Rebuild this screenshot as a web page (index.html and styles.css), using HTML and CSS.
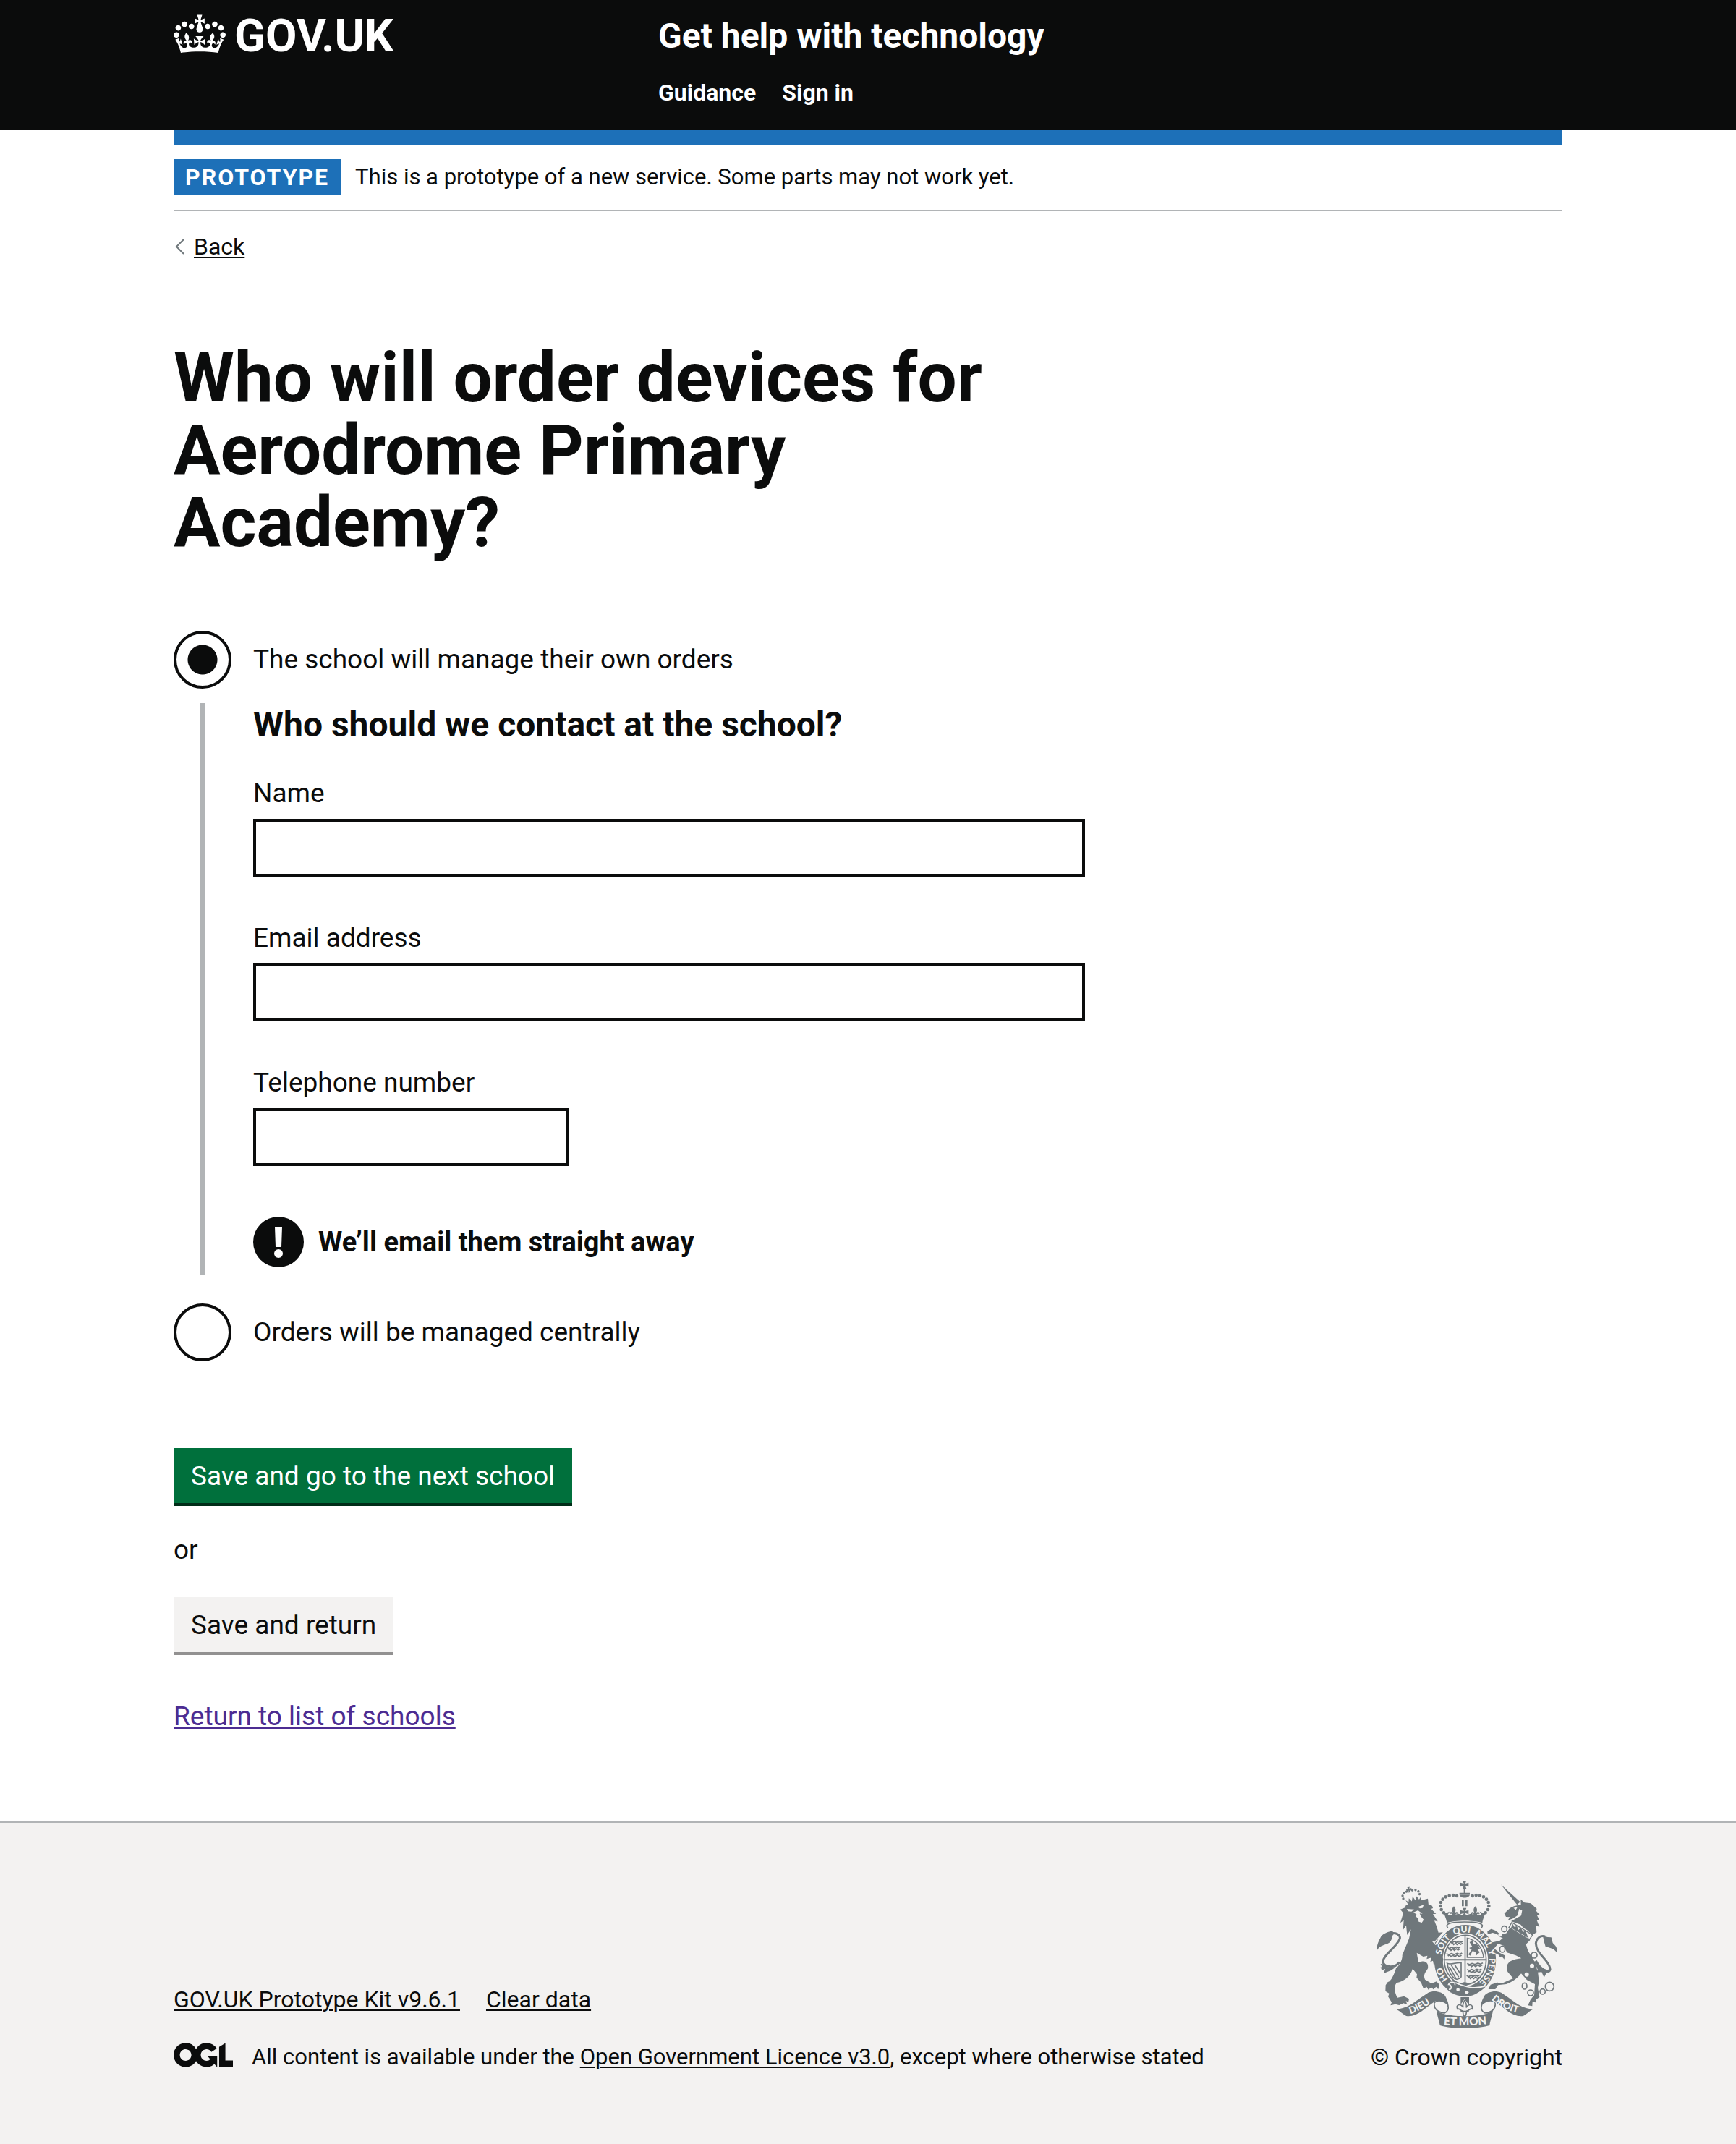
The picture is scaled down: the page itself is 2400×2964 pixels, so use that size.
FILE: index.html
```html
<!DOCTYPE html>
<html lang="en">
<head>
<meta charset="utf-8">
<meta name="viewport" content="width=device-width, initial-scale=1">
<title>Who will order devices for Aerodrome Primary Academy? - Get help with technology</title>
<link rel="stylesheet" href="styles.css">
</head>
<body>
<header class="header">
  <div class="container header-grid">
    <a class="logo" href="#">
      <svg class="logo-crown" viewBox="0 0 132 97" aria-hidden="true"><path fill="currentColor" fill-rule="evenodd" d="M25 30.2c3.5 1.5 7.7-.2 9.1-3.7 1.5-3.6-.2-7.8-3.9-9.2-3.6-1.4-7.6.3-9.1 3.9-1.4 3.5.3 7.5 3.9 9zM9 39.5c3.6 1.5 7.8-.2 9.2-3.7 1.5-3.6-.2-7.8-3.9-9.1-3.6-1.5-7.6.2-9.1 3.8-1.4 3.5.3 7.5 3.8 9zM4.4 57.2c3.5 1.5 7.7-.2 9.1-3.8 1.5-3.6-.2-7.7-3.9-9.1-3.5-1.5-7.6.3-9.1 3.8-1.4 3.5.3 7.6 3.9 9.1zm38.3-21.4c3.5 1.5 7.7-.2 9.1-3.8 1.5-3.6-.2-7.7-3.9-9.1-3.6-1.5-7.6.3-9.1 3.8-1.3 3.6.4 7.7 3.9 9.1zm64.4-5.6c-3.6 1.5-7.8-.2-9.1-3.7-1.5-3.6.2-7.8 3.8-9.2 3.6-1.4 7.7.3 9.2 3.9 1.3 3.5-.4 7.5-3.9 9zm15.9 9.3c-3.6 1.5-7.7-.2-9.1-3.7-1.5-3.6.2-7.8 3.7-9.1 3.6-1.5 7.7.2 9.2 3.8 1.5 3.5-.3 7.5-3.8 9zm4.7 17.7c-3.6 1.5-7.8-.2-9.2-3.8-1.5-3.6.2-7.7 3.9-9.1 3.6-1.5 7.7.3 9.2 3.8 1.3 3.5-.4 7.6-3.9 9.1zM89.3 35.8c-3.6 1.5-7.8-.2-9.2-3.8-1.4-3.6.2-7.7 3.9-9.1 3.6-1.5 7.7.3 9.2 3.8 1.4 3.6-.3 7.7-3.9 9.1zM69.7 17.7l8.9 4.7V9.3l-8.9 2.8c-.2-.3-.5-.6-.9-.9L72.4 0H59.6l3.5 11.2c-.3.3-.6.5-.9.9l-8.8-2.8v13.1l8.8-4.7c.3.3.6.7.9.9l-5 15.4v.1c-.2.8-.4 1.6-.4 2.4 0 4.1 3.1 7.5 7 8.1h.2c.3 0 .7.1 1 .1.4 0 .7 0 1-.1h.2c4-.6 7.1-4.1 7.1-8.1 0-.8-.1-1.7-.4-2.4V34l-5.1-15.4c.4-.2.7-.6 1-.9zM66 92.8c16.9 0 32.8 1.1 47.1 3.2 4-16.9 8.9-26.7 14-33.5l-9.6-3.4c1 4.9 1.1 7.2 0 10.2-1.5-1.4-3-4.3-4.2-8.7L108.6 76c2.8-2 5-3.2 7.5-3.3-4.4 9.4-10 11.9-13.6 11.2-4.3-.8-6.3-4.6-5.6-7.9 1-4.7 5.7-5.9 8-.5 4.3-8.7-3-11.4-7.6-8.8 7.1-7.2 7.9-13.5 2.1-21.1-8 6.1-8.1 12.3-4.5 20.8-4.7-5.4-12.1-2.5-9.5 6.2 3.4-5.2 7.9-2 7.2 3.1-.6 4.3-6.4 7.8-13.5 7.2-10.3-.9-10.9-8-11.2-13.8 2.5-.5 7.1 1.8 11 7.3L80.2 60c-4.1 4.4-8 5.3-12.3 5.4 1.4-4.4 8-11.6 8-11.6H55.5s6.4 7.2 7.9 11.6c-4.2-.1-8-1-12.3-5.4l1.4 16.4c3.9-5.5 8.5-7.7 10.9-7.3-.3 5.8-.9 12.8-11.1 13.8-7.2.6-12.9-2.9-13.5-7.2-.7-5 3.8-8.3 7.1-3.1 2.7-8.7-4.6-11.6-9.4-6.2 3.7-8.5 3.6-14.7-4.6-20.8-5.8 7.6-5 13.9 2.2 21.1-4.7-2.6-11.9.1-7.7 8.8 2.3-5.5 7.1-4.2 8.1.5.7 3.3-1.3 7.1-5.7 7.9-3.5.7-9-1.8-13.5-11.2 2.5.1 4.7 1.3 7.5 3.3l-4.7-15.4c-1.2 4.4-2.7 7.2-4.3 8.7-1.1-3-.9-5.3 0-10.2l-9.5 3.4c5 6.9 9.9 16.7 14 33.5 14.8-2.1 30.8-3.2 47.7-3.2z"/></svg>
      <span class="logo-text">GOV.UK</span>
    </a>
    <div>
      <a class="service-name" href="#">Get help with technology</a>
      <nav class="header-nav" aria-label="Top level navigation">
        <a href="#">Guidance</a>
        <a href="#">Sign in</a>
      </nav>
    </div>
  </div>
</header>

<div class="container">
  <div class="header-bar"></div>
  <div class="phase-banner">
    <strong class="tag">PROTOTYPE</strong>
    <span>This is a prototype of a new service. Some parts may not work yet.</span>
  </div>
  <a class="back-link" href="#">
    <svg class="back-arrow" viewBox="0 0 16 24" aria-hidden="true"><path d="M14 2 4 12l10 10" fill="none" stroke="#6f777b" stroke-width="2"/></svg>
    <span class="back-text">Back</span>
  </a>

  <main class="main">
    <form class="form">
      <fieldset class="fieldset">
        <legend class="title"><h1 class="title-text">Who will order devices for Aerodrome Primary Academy?</h1></legend>

        <div class="radio">
          <input class="radio-input" type="radio" id="own" name="orders" checked>
          <label class="radio-label" for="own">The school will manage their own orders</label>
        </div>

        <div class="conditional">
          <h2 class="subtitle">Who should we contact at the school?</h2>
          <div class="field">
            <label for="name">Name</label>
            <input class="input" id="name" name="name" type="text">
          </div>
          <div class="field">
            <label for="email">Email address</label>
            <input class="input" id="email" name="email" type="email">
          </div>
          <div class="field">
            <label for="tel">Telephone number</label>
            <input class="input input-short" id="tel" name="tel" type="tel">
          </div>
          <div class="warning">
            <svg class="warning-icon" viewBox="0 0 70 70" aria-hidden="true"><circle cx="35" cy="35" r="35" fill="#0b0c0c"/><path d="M30 14h10l-1 28h-8z" fill="#fff"/><circle cx="35" cy="51" r="6" fill="#fff"/></svg>
            <strong>We’ll email them straight away</strong>
          </div>
        </div>

        <div class="radio">
          <input class="radio-input" type="radio" id="central" name="orders">
          <label class="radio-label" for="central">Orders will be managed centrally</label>
        </div>
      </fieldset>

      <div class="actions">
        <button class="button" type="submit">Save and go to the next school</button>
        <p class="or">or</p>
        <button class="button button-secondary" type="submit">Save and return</button>
      </div>
      <a class="return-link" href="#">Return to list of schools</a>
    </form>
  </main>
</div>

<footer class="footer">
  <div class="container footer-row">
    <div class="footer-main">
      <ul class="footer-links">
        <li><a href="#">GOV.UK Prototype Kit v9.6.1</a></li>
        <li><a href="#">Clear data</a></li>
      </ul>
      <div class="licence">
        <svg class="ogl" viewBox="0 0 483 196" aria-hidden="true"><path fill="currentColor" d="M421.500 142.800V.1l-50.700 32.300v161.100h112.400v-50.700zm-122.300-9.600A47.120 47.120 0 0 1 221 97.800c0-26 21.100-47.100 47.100-47.100 16.700 0 31.400 8.700 39.700 21.800l42.700-27.200A97.630 97.630 0 0 0 268.100 0c-36.500 0-68.300 20.100-85.100 49.700A98 98 0 0 0 97.800 0C43.900 0 0 43.900 0 97.800s43.900 97.800 97.800 97.800c36.500 0 68.300-20.100 85.100-49.700a97.760 97.760 0 0 0 149.600 25.400l19.400 22.200h3v-87.800h-80l24.300 27.500zM97.800 145c-26 0-47.100-21.100-47.100-47.100s21.100-47.100 47.100-47.100 47.100 21.100 47.100 47.100S123.800 145 97.800 145"/></svg>
        <span>All content is available under the <a href="#">Open Government Licence v3.0</a>, except where otherwise stated</span>
      </div>
    </div>
    <a class="copyright" href="#">
      <svg class="crest" viewBox="72 60 750 612" aria-hidden="true">
        <defs>
          <path id="motto" d="M440 502A100 114 0 0 1 440 274A100 114 0 0 1 440 502"/>
          <path id="dieu" d="M212 612Q264 598 326 544"/>
          <path id="droit" d="M548 552Q594 598 686 616"/>
          <path id="mon" d="M350 657Q437 666 534 654"/>
          <g id="lions" fill="none" stroke-width="5"><path d="M0 4l8 5 9-5 10 4 10-5 9 4 8-5M5 14l6-4 4 7 8-6 6 6 8-7 7 6 8-5"/></g>
          <g id="fleur"><path d="M0-24C-11-11-7-5-4 4C-12-5-21 2-16 10C-12 4-8 7-5 14H5C8 7 12 4 16 10C21 2 12-5 4 4C7-5 11-11 0-24Z"/></g>
          <g id="cross"><path d="M-8-17H8L3-4 17-8V9L3 4 8 17H-8L-3 4-17 9V-8L-3-4Z"/></g>
        </defs>
        <g class="crest-fill">
          <!-- lion -->
          <g transform="translate(216 118) rotate(-14)"><path d="M-28 17-22 38H34L38 17 27 27 20 12 11 27 4 8-4 27-13 12-18 27Z"/><use href="#cross" transform="translate(-4 -22) scale(.65)"/><circle cx="-16" cy="-17" r="5"/><circle cx="-28" cy="-14" r="5"/><circle cx="-36" cy="-4" r="5"/><circle cx="-36" cy="8" r="5"/><circle cx="9" cy="-17" r="5"/><circle cx="22" cy="-15" r="5"/><circle cx="32" cy="-6" r="5"/><circle cx="34" cy="6" r="5"/></g>
          <path d="M171 179 190 172 194 162 262 140 285 134 288 162C298 158 306 165 306 174L299 177 319 198 306 198 326 229 312 226 322 251 329 275 347 274 317 320 333 350 349 385 344 418 334 407 324 416 320 400 309 408 306 392 295 397 300 379 280 385 283 371 266 375 239 359 246 399C276 386 289 402 285 424C276 440 264 449 273 470L300 486 321 478 333 491 328 510 319 500 308 511 299 502 287 512 280 500 267 508 257 482 238 462 240 448 222 425C214 455 188 477 155 484C142 500 148 528 159 545L186 539 207 550 204 565 194 558 199 574 184 568 166 576 150 572 130 577 135 565 120 540 125 528 109 518 110 493 119 480C132 479 146 447 153 423C170 409 180 384 179 368L207 300 215 262 199 285 195 246 182 264 185 224 171 235 183 194Z"/>
          <path d="M167 398C147 427 96 418 99 393C104 363 155 337 169 300C171 283 151 273 128 279" fill="none" class="crest-line" stroke-width="9"/>
          <path d="M72 352C74 320 82 310 91 291C106 274 126 272 137 267L146 281C132 287 143 296 127 316C107 331 89 322 72 352ZM89 405 98 423 89 417 94 431 108 426 102 444 132 432 151 419 119 418 104 407Z"/>
          <path class="crest-paper" d="M198 177 228 179 217 188 203 187ZM243 169 268 160 263 173 252 175ZM224 192 244 183 263 197 251 196 256 208 268 222 260 234 247 230 244 217 234 207 238 199Z"/>
          <!-- unicorn -->
          <path d="M588 76 668 148 655 160ZM602 196 623 176C640 164 657 162 671 160L670 137 686 151 712 154 738 178 730 181 749 202 738 204 747 223 737 224 748 252 734 245 736 274 718 286 697 265 681 256 670 242 630 228 672 205 676 184 664 177 656 205 638 217 617 224 625 211 609 210Z"/>
          <path d="M625 256 709 306 692 324 700 350 730 399 742 445 746 478 741 505 748 543 735 552 734 565 719 563 718 580 700 577 711 553 726 535 729 489 696 472 672 445C655 465 637 480 610 489L576 493 565 510 536 510 545 491 573 482 593 485 639 465 616 438C607 407 617 388 673 382L650 370 613 358 600 330 576 321 560 341 584 360 604 370 602 386 592 374 583 376 580 368 562 359 541 330 552 316 583 309 596 298 584 293 572 281 554 276 533 282 532 269 548 260 568 268 583 281 610 278Z"/>
          <path d="M633 233 719 285 706 305 621 254Z" class="crest-paper crest-line" stroke-width="4"/>
          <path d="M630 255 637 239 644 252 655 248 660 265 671 254 680 273 690 267 700 293 706 300Z"/>
          <path d="M733 392C752 430 798 454 791 420C782 385 734 362 733 320C736 297 752 286 771 291" fill="none" class="crest-line" stroke-width="9"/>
          <path d="M762 289 782 294 797 295 803 318C812 329 823 333 822 362C810 340 795 340 773 333L767 313ZM724 391 744 415 778 430 798 426 777 442 767 461 757 439 733 441 741 430Z"/>
          <g class="crest-paper"><circle cx="717" cy="413" r="9"/><circle cx="695" cy="449" r="9"/><circle cx="585" cy="284" r="8"/><path d="M640 173 657 169 650 181Z"/></g>
          <g fill="none" class="crest-line" stroke-width="5"><ellipse cx="602" cy="260" rx="11" ry="12"/><ellipse cx="594" cy="344" rx="11" ry="13"/><circle cx="726" cy="369" r="12"/><ellipse cx="686" cy="497" rx="10" ry="13"/><circle cx="711" cy="525" r="12"/><circle cx="761" cy="520" r="11"/><circle cx="790" cy="499" r="18"/></g>
          <!-- royal crown -->
          <use href="#cross" transform="translate(437 76)"/>
          <path d="M416 110H434V93H441V110H459V114H416ZM416 118H459C457 135 418 135 416 118ZM426 138H434V166H426ZM441 138H449V166H441Z"/>
          <g><circle cx="405" cy="123" r="7"/><circle cx="390" cy="120" r="7"/><circle cx="374" cy="122" r="7"/><circle cx="359" cy="127" r="7"/><circle cx="347" cy="137" r="7"/><circle cx="339" cy="150" r="7"/><circle cx="337" cy="165" r="7"/><circle cx="341" cy="180" r="7"/><circle cx="351" cy="193" r="7"/><circle cx="470" cy="123" r="7"/><circle cx="485" cy="120" r="7"/><circle cx="501" cy="122" r="7"/><circle cx="516" cy="127" r="7"/><circle cx="528" cy="137" r="7"/><circle cx="536" cy="150" r="7"/><circle cx="538" cy="165" r="7"/><circle cx="534" cy="180" r="7"/><circle cx="524" cy="193" r="7"/></g>
          <use href="#fleur" transform="translate(393 190)"/><use href="#fleur" transform="translate(482 190)"/><use href="#cross" transform="translate(437 190)"/>
          <path d="M349 187 360 194 375 188 368 201 393 202 412 197 437 205 463 197 482 202 507 201 500 188 515 194 526 187C520 207 513 218 511 235C475 223 400 223 364 235C362 218 355 207 349 187Z"/>
          <path d="M368 255C354 241 374 231 437 231C501 231 521 241 507 255" fill="none" class="crest-line" stroke-width="5"/>
          <!-- garter -->
          <path fill-rule="evenodd" d="M440 243A128 147 0 1 1 439 243ZM440 278A94 110 0 1 0 441 278Z"/>
          <ellipse cx="440" cy="388" rx="87" ry="102" fill="none" class="crest-line" stroke-width="5"/>
          <path d="M437 286H442V490H437ZM353 385H527V391H353ZM415 487 437 480 464 487 437 499Z"/>
          <use href="#lions" class="crest-line" transform="translate(377 308)"/><use href="#lions" class="crest-line" transform="translate(366 332)"/><use href="#lions" class="crest-line" transform="translate(362 358) scale(1.2 1)"/>
          <use href="#lions" class="crest-line" transform="translate(448 399) scale(1.2 1)"/><use href="#lions" class="crest-line" transform="translate(448 424) scale(1.1 1)"/><use href="#lions" class="crest-line" transform="translate(446 449)"/>
          <path d="M448 298V378H516C511 340 493 309 448 298Z" fill="none" class="crest-line" stroke-width="4"/>
          <path d="M458 315 470 309 475 322 490 325 503 344 489 342 500 357 486 370 482 355 470 352 461 371 453 366 467 345 456 339 469 334Z"/>
          <path d="M365 403C382 410 400 398 423 401V459C397 489 373 444 365 403Z M382 410 413 460 M396 408 419 445 M374 417 402 467" fill="none" class="crest-line" stroke-width="5"/>
          <path d="M366 490 376 475 398 478 405 489C440 499 475 508 511 507C472 552 411 545 374 519L362 506Z" class="crest-line" stroke-width="1"/>
          <path d="M400 483C440 500 475 512 526 496" fill="none" class="crest-gap" stroke-width="5"/>
          <path d="M372 510C388 514 382 490 371 490C377 475 402 480 397 493" fill="none" class="crest-gap" stroke-width="5"/>
          <g class="crest-paper"><circle cx="410" cy="512" r="7"/><circle cx="447" cy="523" r="7"/></g>
          <g class="crest-paper crest-motto">
            <text><textPath href="#motto" startOffset="12%">HO</textPath></text>
            <text><textPath href="#motto" startOffset="28%">SOIT</textPath></text>
            <text><textPath href="#motto" startOffset="43%">QUI</textPath></text>
            <text><textPath href="#motto" startOffset="56%">MAL</textPath></text>
            <text><textPath href="#motto" startOffset="69%">Y</textPath></text>
            <text><textPath href="#motto" startOffset="74%">PENSE</textPath></text>
          </g>
          <path d="M311 318 345 279M304 310 318 326" fill="none" class="crest-gap" stroke-width="4"/>
          <!-- scrolls -->
          <path d="M421 543H456V574L447 565 437 551 427 565 421 574Z"/>
          <path d="M437 557C428 570 429 577 432 586C419 567 399 574 408 592C415 588 419 599 430 600L432 617Q438 626 443 617L446 600C457 599 461 588 468 592C475 574 456 567 444 586C446 577 447 570 437 557ZM421 602H455" class="crest-paper crest-line" stroke-width="5"/>
          <path d="M149 592C201 595 244 550 287 524C309 514 344 519 357 538C365 555 372 568 370 580C350 560 322 552 310 563C271 590 238 627 196 621C179 614 171 600 149 592Z"/>
          <path d="M725 592C673 595 632 550 589 524C567 514 532 519 519 538C511 555 504 568 506 580C526 560 554 552 566 563C605 590 638 627 680 621C697 614 705 600 725 592Z"/>
          <path d="M312 566C308 590 324 605 354 609C370 600 373 587 366 572C351 557 323 553 312 566ZM564 566C568 590 552 605 522 609C506 600 503 587 510 572C525 557 553 553 564 566Z" class="crest-paper crest-line" stroke-width="5"/>
          <path d="M321 598C350 630 525 630 555 598C552 621 544 636 541 660C487 676 388 676 335 660C331 636 323 621 321 598Z"/>
          <g class="crest-paper crest-scroll">
            <text><textPath href="#dieu">DIEU</textPath></text>
            <text><textPath href="#droit">DROIT</textPath></text>
            <text class="crest-scroll-wide"><textPath href="#mon">ET MON</textPath></text>
          </g>
        </g>
      </svg>
      <span>© Crown copyright</span>
    </a>
  </div>
</footer>
</body>
</html>
```
FILE: styles.css
```css
:root {
  --black: #0b0c0c;
  --blue: #1d70b8;
  --border: #b1b4b6;
  --paper: #f3f2f1;
  --crest: #6f777b;
}

* {
  box-sizing: border-box;
}

body {
  margin: 0;
  background: #fff;
  color: var(--black);
  font-family: Roboto, "Liberation Sans", Arial, sans-serif;
  font-size: 37px;
  line-height: 50px;
}

a {
  color: inherit;
  text-decoration-thickness: 2px;
  text-underline-offset: 3px;
}

.container {
  max-width: 1920px;
  margin: 0 auto;
}

/* Header */
.header {
  background: var(--black);
  color: #fff;
}

.header a {
  text-decoration: none;
}

.header-grid {
  display: grid;
  grid-template-columns: 33.333% 1fr;
  column-gap: 30px;
  padding: 20px 0 32px;
}

.logo {
  display: flex;
  gap: 12px;
  align-items: flex-start;
}

.logo-crown {
  width: 72px;
  height: 54px;
}

.logo-text {
  font-size: 63px;
  font-weight: 700;
  line-height: 60px;
}

.service-name {
  display: block;
  font-size: 48px;
  font-weight: 700;
  line-height: 60px;
}

.header-nav {
  display: flex;
  gap: 36px;
  margin-top: 28px;
  font-size: 32px;
  font-weight: 700;
  line-height: 40px;
}

.header-bar {
  height: 20px;
  background: var(--blue);
}

/* Phase banner and back link */
.phase-banner {
  display: flex;
  gap: 20px;
  padding: 20px 0;
  border-bottom: 2px solid var(--border);
  font-size: 31px;
}

.tag {
  padding: 0 16px;
  background: var(--blue);
  color: #fff;
  font-size: 32px;
  letter-spacing: 2px;
}

.back-link {
  display: flex;
  gap: 12px;
  align-items: center;
  width: fit-content;
  margin-top: 30px;
  font-size: 32px;
  line-height: 38px;
  text-decoration: none;
}

.back-arrow {
  width: 16px;
  height: 24px;
}

.back-text {
  text-decoration: underline 2px;
  text-underline-offset: 3px;
}

/* Form */
.main {
  display: flex;
  padding: 112px 0 120px;
}

.form {
  width: 100%;
  max-width: 1260px;
}

.fieldset {
  margin: 0;
  padding: 0;
  border: 0;
}

.title {
  padding: 0;
  margin-bottom: 100px;
}

.title-text {
  margin: 0;
  font-size: 96px;
  font-weight: 700;
  line-height: 100px;
}

.radio {
  display: flex;
  align-items: center;
  gap: 30px;
}

.radio-input {
  appearance: none;
  width: 80px;
  height: 80px;
  margin: 0;
  border: 4px solid var(--black);
  border-radius: 50%;
  background: #fff;
}

.radio-input:checked {
  background: radial-gradient(circle, var(--black) 20px, #fff 21px);
}

.conditional {
  margin: 20px 0 40px 36px;
  padding: 0 0 10px 66px;
  border-left: 8px solid var(--border);
}

.subtitle {
  margin: 0 0 40px;
  font-size: 48px;
  font-weight: 700;
  line-height: 60px;
}

.field {
  display: flex;
  flex-direction: column;
  gap: 10px;
  margin-bottom: 60px;
}

.input {
  width: 100%;
  height: 80px;
  padding: 10px;
  border: 4px solid var(--black);
  border-radius: 0;
  background: #fff;
  font: inherit;
}

.input-short {
  max-width: 436px;
}

.warning {
  display: flex;
  gap: 20px;
  align-items: center;
  margin-top: 70px;
  font-size: 38px;
}

.warning-icon {
  width: 70px;
  height: 70px;
}

.actions {
  display: flex;
  flex-direction: column;
  align-items: flex-start;
  margin: 120px 0 60px;
}

.button {
  padding: 14px 24px 12px;
  border: 0;
  border-bottom: 4px solid #002d18;
  border-radius: 0;
  background: #00703c;
  color: #fff;
  font: inherit;
}

.button-secondary {
  border-bottom-color: #929191;
  background: var(--paper);
  color: var(--black);
}

.or {
  margin: 36px 0 40px;
}

.return-link {
  color: #4c2c92;
}

/* Footer */
.footer {
  padding: 80px 0 100px;
  border-top: 2px solid var(--border);
  background: var(--paper);
  font-size: 32px;
  line-height: 40px;
}

.footer-row {
  display: flex;
  justify-content: space-between;
  align-items: flex-end;
}

.footer-links {
  display: flex;
  gap: 36px;
  margin: 0 0 40px;
  padding: 0;
  list-style: none;
}

.licence {
  display: flex;
  gap: 26px;
  font-size: 31px;
}

.ogl {
  width: 82px;
  height: 34px;
}

.copyright {
  display: flex;
  flex-direction: column;
  align-items: center;
  gap: 20px;
  text-decoration: none;
}

.crest {
  width: 250px;
  height: 204px;
}

.crest-fill {
  fill: var(--crest);
}

.crest-line {
  stroke: var(--crest);
}

.crest-paper {
  fill: var(--paper);
}

.crest-gap {
  stroke: var(--paper);
}

.crest-motto,
.crest-scroll {
  font-family: Lato, sans-serif;
  font-weight: 900;
}

.crest-motto {
  font-size: 36px;
}

.crest-scroll {
  font-size: 40px;
}

.crest-scroll-wide {
  font-size: 46px;
}
```
